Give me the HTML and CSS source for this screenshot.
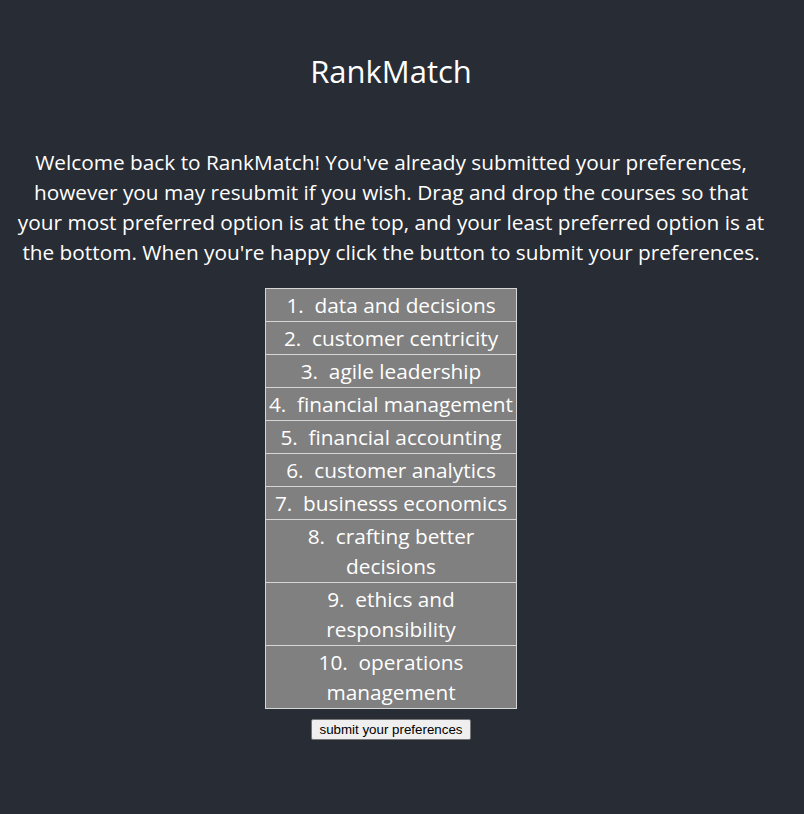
FILE: index.html
```html
<!DOCTYPE html>
<html lang="en">
<head>
<meta charset="utf-8">
<title>RankMatch</title>
<link rel="stylesheet" href="styles.css">
</head>
<body>
<div class="app">
  <h1 class="title">RankMatch</h1>
  <p class="intro">Welcome back to RankMatch! You've already submitted your preferences, however you may resubmit if you wish. Drag and drop the courses so that your most preferred option is at the top, and your least preferred option is at the bottom. When you're happy click the button to submit your preferences.</p>
  <ol class="ranking">
    <li class="course">1.&nbsp; data and decisions</li>
    <li class="course">2.&nbsp; customer centricity</li>
    <li class="course">3.&nbsp; agile leadership</li>
    <li class="course">4.&nbsp; financial management</li>
    <li class="course">5.&nbsp; financial accounting</li>
    <li class="course">6.&nbsp; customer analytics</li>
    <li class="course">7.&nbsp; businesss economics</li>
    <li class="course">8.&nbsp; crafting better decisions</li>
    <li class="course">9.&nbsp; ethics and responsibility</li>
    <li class="course">10.&nbsp; operations management</li>
  </ol>
  <button class="submit" type="button">submit your preferences</button>
</div>
</body>
</html>
```

FILE: styles.css
```css
html, body {
  margin: 0;
  padding: 0;
  background: #282c34;
  min-height: 100%;
}

body {
  font-family: "Open Sans", "Noto Sans", sans-serif;
  color: #ffffff;
}

.app {
  display: flex;
  flex-direction: column;
  align-items: center;
  padding: 47px 30px 40px 8px;
  text-align: center;
}

.title {
  margin: 0;
  font-size: 31px;
  font-weight: 400;
  line-height: 48px;
}

.intro {
  margin: 52px 0 0;
  max-width: 754px;
  font-size: 20.8px;
  line-height: 30px;
}

.ranking {
  list-style: none;
  margin: 21px 0 0;
  padding: 0;
  width: 250px;
  background: #808080;
  border: 1px solid #d6d6d6;
  border-bottom: none;
}

.course {
  padding: 1px 0;
  font-size: 20.8px;
  line-height: 30px;
  border-bottom: 1px solid #d6d6d6;
}

.submit {
  margin-top: 10px;
  font-family: "Liberation Sans", Arial, sans-serif;
  font-size: 13.33px;
  color: #000000;
  background: #efefef;
  border: 1px solid #767676;
  border-radius: 2px;
  padding: 1px 7.5px;
  height: 21px;
}
```
